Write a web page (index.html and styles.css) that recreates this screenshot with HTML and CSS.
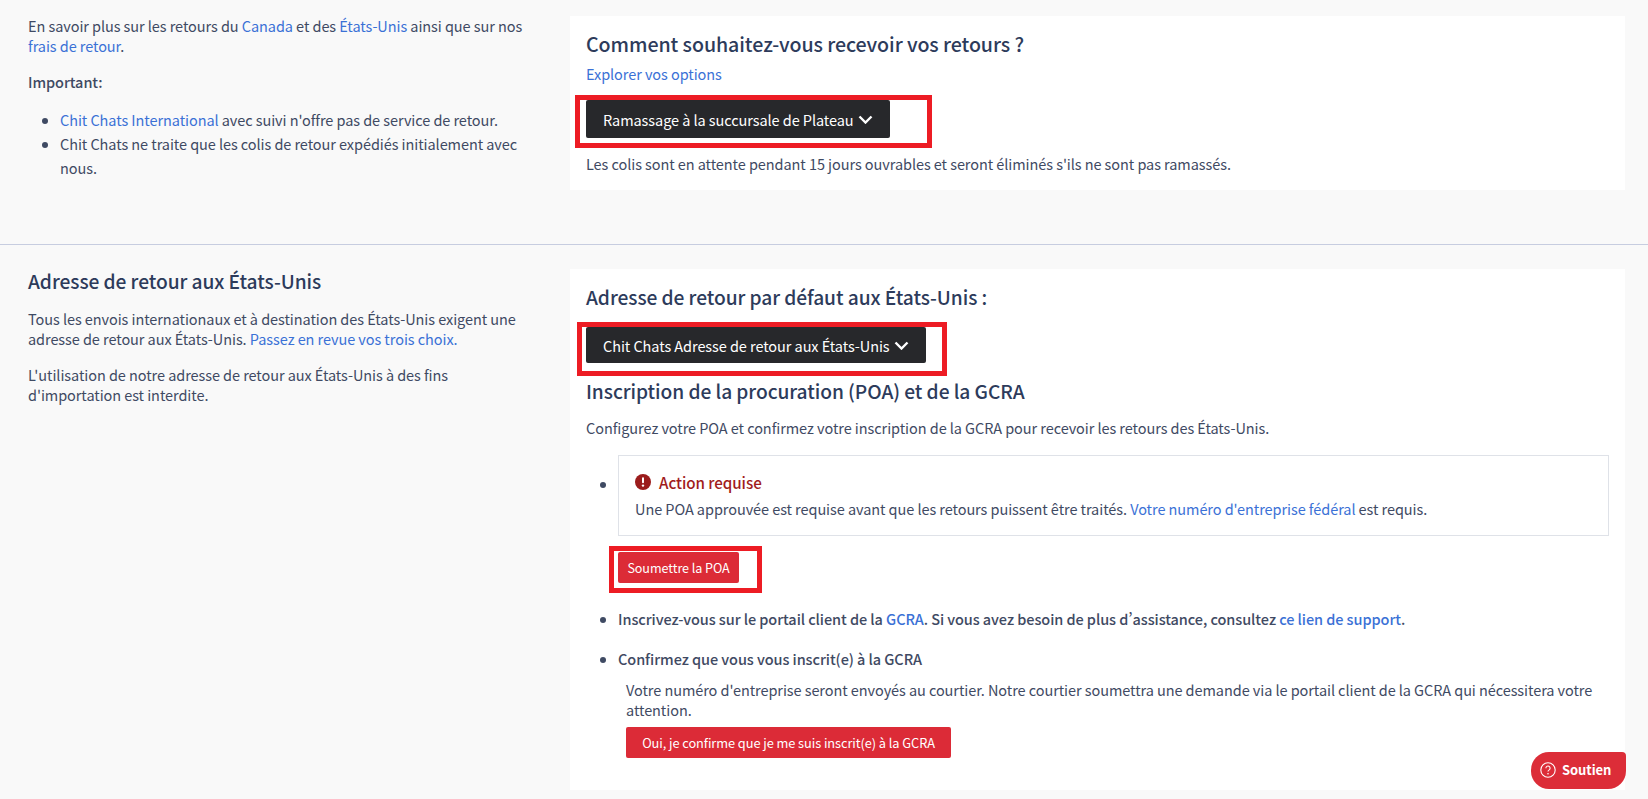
FILE: index.html
```html
<!DOCTYPE html>
<html lang="fr">
<head>
    <meta charset="UTF-8">
    <meta name="viewport" content="width=device-width, initial-scale=1.0">
    <title>Retours</title>
    <link rel="stylesheet" href="styles.css">
</head>
<body>
    <section class="section first">
        <div class="intro">
            <p>En savoir plus sur les retours du <a href="#">Canada</a> et des <a href="#">États-Unis</a> ainsi que sur nos <a href="#">frais de retour</a>.</p>
            <p class="strong">Important:</p>
            <ul class="introList">
                <li><a href="#">Chit Chats International</a> avec suivi n'offre pas de service de retour.</li>
                <li>Chit Chats ne traite que les colis de retour expédiés initialement avec nous.</li>
            </ul>
        </div>
        <div class="card cardFirst">
            <h3 class="cardTitle cardTitleFirst">Comment souhaitez-vous recevoir vos retours ?</h3>
            <a class="options" href="#">Explorer vos options</a>
            <div class="btnWrap btnWrapFirst">
                <button class="darkButton">Ramassage à la succursale de Plateau
                    <svg class="chevron" viewBox="0 0 15 9"><path d="M1.5 1.5l6 6 6-6"/></svg>
                </button>
                <span class="mark markPlateau"></span>
            </div>
            <p class="note">Les colis sont en attente pendant 15 jours ouvrables et seront éliminés s'ils ne sont pas ramassés.</p>
        </div>
    </section>

    <section class="section second">
        <div class="intro">
            <h2 class="introTitle">Adresse de retour aux États-Unis</h2>
            <p>Tous les envois internationaux et à destination des États-Unis exigent une adresse de retour aux États-Unis. <a href="#">Passez en revue vos trois choix.</a></p>
            <p>L'utilisation de notre adresse de retour aux États-Unis à des fins d'importation est interdite.</p>
        </div>
        <div class="card cardSecond">
            <h3 class="cardTitle">Adresse de retour par défaut aux États-Unis :</h3>
            <div class="btnWrap btnWrapSecond">
                <button class="darkButton">Chit Chats Adresse de retour aux États-Unis
                    <svg class="chevron" viewBox="0 0 15 9"><path d="M1.5 1.5l6 6 6-6"/></svg>
                </button>
                <span class="mark markAddress"></span>
            </div>
            <h3 class="cardTitle poaTitle">Inscription de la procuration (POA) et de la GCRA</h3>
            <p class="poaText">Configurez votre POA et confirmez votre inscription de la GCRA pour recevoir les retours des États-Unis.</p>
            <ul class="steps">
                <li class="stepAlert">
                    <div class="alert">
                        <div class="alertHead">
                            <svg class="alertIcon" viewBox="0 0 16 16"><circle cx="8" cy="8" r="8"/><rect class="alertMark" x="7" y="3.2" width="2" height="6" rx="1"/><circle class="alertMark" cx="8" cy="11.6" r="1.2"/></svg>
                            Action requise
                        </div>
                        <p>Une POA approuvée est requise avant que les retours puissent être traités. <a href="#">Votre numéro d'entreprise fédéral</a> est requis.</p>
                    </div>
                    <div class="btnWrap btnWrapPoa">
                        <button class="redButton small">Soumettre la POA</button>
                        <span class="mark markPoa"></span>
                    </div>
                </li>
                <li class="strong stepPortal">Inscrivez-vous sur le portail client de la <a href="#">GCRA</a>. Si vous avez besoin de plus d’assistance, consultez <a href="#">ce lien de support</a>.</li>
                <li class="stepConfirm">
                    <div class="strong">Confirmez que vous vous inscrit(e) à la GCRA</div>
                    <div class="confirmBody">
                        <p>Votre numéro d'entreprise seront envoyés au courtier. Notre courtier soumettra une demande via le portail client de la GCRA qui nécessitera votre attention.</p>
                        <button class="redButton wide">Oui, je confirme que je me suis inscrit(e) à la GCRA</button>
                    </div>
                </li>
            </ul>
        </div>
    </section>

    <button class="support">
        <svg class="supportIcon" viewBox="0 0 16 16"><circle cx="8" cy="8" r="7.2"/><path d="M5.9 6.2a2.1 2.1 0 1 1 3.3 1.7c-.8.5-1.2.9-1.2 1.7"/><circle class="dot" cx="8" cy="11.7" r=".8"/></svg>
        Soutien
    </button>
</body>
</html>
```
FILE: styles.css
```css
html, body {
    height: 799px;
    overflow: hidden;
}
body {
    margin: 0;
    background-color: #f9f9f9;
    color: #3f4a63;
    font-family: "Noto Sans CJK SC", "Source Sans Pro", "Noto Sans", sans-serif;
    font-size: 14.5px;
    letter-spacing: -0.07px;
    line-height: 20px;
    font-variant-east-asian: proportional-width;
}
a {
    color: #3b71d6;
    text-decoration: none;
}
p {
    margin: 0;
}
button {
    font-family: inherit;
    letter-spacing: inherit;
    border: 0;
    color: #fff;
    white-space: nowrap;
}
.strong {
    font-weight: 500;
}

.section {
    display: grid;
    grid-template-columns: 542px 1055px;
    padding-left: 28px;
}
.first {
    padding-top: 16px;
    height: 228px;
    border-bottom: 1px solid #c7cde0;
}
.second {
    padding-top: 24px;
}

.intro {
    width: 496px;
}
.intro p {
    margin-bottom: 16px;
}
.introList {
    margin: 0;
    padding-left: 32px;
    line-height: 24px;
}
.introTitle {
    margin: -2px 0 14px;
    font-size: 19.2px;
    font-weight: 500;
    line-height: 28px;
    color: #2d3b5b;
}

.card {
    background-color: #fff;
    padding: 0 16px;
}
.cardFirst {
    height: 174px;
    padding-top: 14px;
    box-sizing: border-box;
}
.cardSecond {
    height: 521px;
    padding-top: 14px;
    box-sizing: border-box;
}
.cardTitle {
    margin: 0;
    font-size: 19.2px;
    font-weight: 500;
    line-height: 28px;
    color: #2d3b5b;
}
.cardTitleFirst {
    font-size: 19.6px;
}
.options {
    display: block;
    margin-top: 6px;
}

.btnWrap {
    position: relative;
    width: fit-content;
}
.btnWrapFirst {
    margin-top: 16px;
}
.btnWrapSecond {
    margin-top: 16px;
}
.darkButton {
    display: flex;
    align-items: center;
    gap: 4px;
    height: 38px;
    padding: 0 17px;
    background-color: #27282b;
    border-radius: 2px;
    font-size: 14.5px;
}
.btnWrapSecond .darkButton {
    height: 36px;
}
.chevron {
    width: 15px;
    height: 9px;
    fill: none;
    stroke: #fff;
    stroke-width: 2.4;
}

/* red boxes drawn over the screenshot */
.mark {
    position: absolute;
    border: 5px solid #ed1c24;
    pointer-events: none;
}
.markPlateau {
    top: -5px;
    left: -11px;
    width: 347px;
    height: 43px;
}
.markAddress {
    top: -5px;
    left: -9px;
    width: 360px;
    height: 44px;
}
.markPoa {
    top: -6px;
    left: -9px;
    width: 143px;
    height: 37px;
}

.note {
    margin-top: 16px;
}
.poaTitle {
    margin-top: 14px;
}
.poaText {
    margin-top: 13px;
}

.steps {
    margin: 17px 0 0;
    padding-left: 32px;
}
.alert {
    width: 991px;
    height: 81px;
    box-sizing: border-box;
    border: 1px solid #dfe2e8;
    padding: 11px 16px 0;
}
.alertHead {
    display: flex;
    align-items: center;
    gap: 8px;
    height: 30px;
    font-size: 15.2px;
    font-weight: 500;
    color: #a11c1c;
}
.alertIcon {
    width: 16px;
    height: 16px;
    fill: #9b1c1c;
}
.alertMark {
    fill: #fff;
}
.alert p {
    margin-top: 2px;
}
.btnWrapPoa {
    margin-top: 16px;
}
.redButton {
    background-color: #dc2b37;
    border-radius: 2px;
}
.small {
    display: block;
    width: 121px;
    height: 31px;
    font-size: 12.6px;
}
.wide {
    display: block;
    width: 325px;
    height: 31px;
    margin-top: 7px;
    font-size: 12.8px;
}
.stepPortal {
    margin-top: 26px;
}
.stepConfirm {
    margin-top: 20px;
}
.confirmBody {
    margin: 11px 0 0 8px;
}

.support {
    position: fixed;
    left: 1531px;
    top: 752px;
    display: flex;
    align-items: center;
    gap: 6px;
    width: 95px;
    height: 37px;
    padding: 0 0 2px 9px;
    background-color: #dc2d38;
    border-radius: 18px 4px 18px 18px;
    font-size: 13px;
    font-weight: 700;
}
.supportIcon {
    width: 16px;
    height: 16px;
    fill: none;
    stroke: #fff;
    stroke-width: 1.1;
}
.supportIcon .dot {
    fill: #fff;
    stroke: none;
}
```
